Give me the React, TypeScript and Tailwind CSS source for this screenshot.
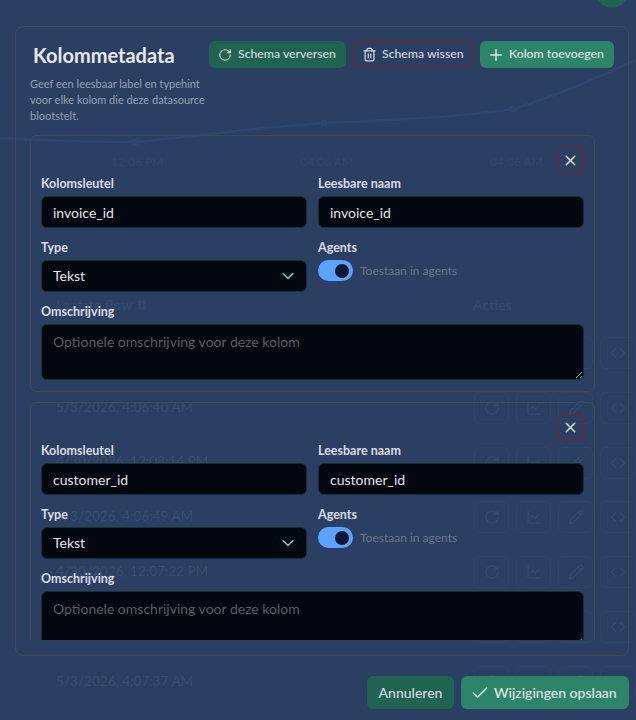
import React from 'react';
import { RotateCw, Trash2, Plus, X, ChevronDown, Check, ChartLine, Pencil, Code } from 'lucide-react';

const rows = [
  '',
  '5/3/2026, 4:06:40 AM',
  '4/30/2026, 12:08:14 PM',
  '5/3/2026, 4:06:49 AM',
  '4/30/2026, 12:07:22 PM',
  '',
  '5/3/2026, 4:07:37 AM',
];

const IconBox: React.FC<{ children: React.ReactNode }> = ({ children }) => (
  <div className="w-[35px] h-[32px] shrink-0 rounded-md border border-[#2d4668] flex items-center justify-center text-[#344b6e]">
    {children}
  </div>
);

const Backdrop: React.FC = () => (
  <div className="absolute inset-0 overflow-hidden">
    <div className="absolute right-[8px] top-[-24px] w-[32px] h-[32px] rounded-full bg-[#1f6350]"></div>
    <svg className="absolute left-0 top-0" width="636" height="160" viewBox="0 0 636 160" fill="none">
      <path d="M0 138 C50 141 90 142 135 142 C200 136 260 127 324 123 C390 120 460 117 513 109 C560 95 600 76 636 60" stroke="#2d4870" strokeWidth="2.5" />
      <circle cx="135" cy="142" r="3.5" fill="#2d4870" />
      <circle cx="324" cy="123" r="3.5" fill="#2d4870" />
      <circle cx="513" cy="109" r="3.5" fill="#2d4870" />
    </svg>
    <div className="pt-[154px] pl-[111px] flex gap-[137px] text-[12px] leading-[16px] text-[#32466a]">
      <span>12:06 PM</span>
      <span>04:06 AM</span>
      <span>04:06 AM</span>
    </div>
    <div className="mt-[125px] pl-[56px] flex justify-between w-[512px] text-[14px] leading-[20px] font-bold text-[#31496c]">
      <span>Laatste flow ⇅</span>
      <span>Acties</span>
    </div>
    <div className="mt-[22px] pl-[56px] flex flex-col gap-[22.8px]">
      {rows.map((date, i) => (
        <div key={i} className="flex items-center h-[32px] text-[13.6px] text-[#3a4d6d]">
          <span className="w-[418px] shrink-0 whitespace-nowrap mt-[-2px]">{date}</span>
          <div className="flex gap-[7px]">
            <IconBox><RotateCw size={16} /></IconBox>
            <IconBox><ChartLine size={16} /></IconBox>
            <IconBox><Pencil size={16} /></IconBox>
            <IconBox><Code size={16} /></IconBox>
          </div>
        </div>
      ))}
    </div>
  </div>
);

const Field: React.FC<{ label: string; children: React.ReactNode }> = ({ label, children }) => (
  <div className="flex flex-col">
    <label className="text-[12.5px] leading-[16px] font-bold text-[#d8dde6] mt-[1px] mb-[4px]">{label}</label>
    {children}
  </div>
);

const fieldClass = 'w-full h-[32px] rounded-md border border-[#14303a] bg-[#03070f] px-[11px] text-[14px] text-[#e3e6eb] flex items-center';

const ColumnCard: React.FC<{ name: string }> = ({ name }) => (
  <div className="shrink-0 border border-[#434a57] rounded-md px-[10px] pt-[11px] pb-[11px]">
    <div className="flex justify-end h-[26px] mb-[2px]">
      <button className="w-[27px] h-[26px] rounded-md border border-[#7d1f2c] flex items-center justify-center text-[#e5e7eb]">
        <X size={17} strokeWidth={2} />
      </button>
    </div>
    <div className="grid grid-cols-2 gap-x-[11px] gap-y-[11px]">
      <Field label="Kolomsleutel">
        <div className={fieldClass}>{name}</div>
      </Field>
      <Field label="Leesbare naam">
        <div className={fieldClass}>{name}</div>
      </Field>
      <Field label="Type">
        <div className={`${fieldClass} justify-between`}>
          <span className="mt-[-2px]">Tekst</span>
          <ChevronDown size={20} className="text-[#5eead4] mr-[-3px]" strokeWidth={1.5} />
        </div>
      </Field>
      <Field label="Agents">
        <div className="flex items-center gap-[7px] h-[21px]">
          <div className="w-[35px] h-[21px] rounded-full bg-[#5ba3ff] flex items-center justify-end pr-[4px]">
            <div className="w-[14px] h-[14px] rounded-full bg-[#0b1a33]"></div>
          </div>
          <span className="text-[12px] text-[#6d7687]">Toestaan in agents</span>
        </div>
      </Field>
      <div className="col-span-2">
        <Field label="Omschrijving">
          <textarea
            readOnly
            placeholder="Optionele omschrijving voor deze kolom"
            className="w-full h-[56px] rounded-md border border-[#14303a] bg-[#03070f] px-[11px] py-[6px] text-[14px] text-[#e3e6eb] placeholder:text-[#565c66] block outline-none"
          />
        </Field>
      </div>
    </div>
  </div>
);

const App: React.FC = () => {
  return (
    <div className="relative w-[636px] h-[720px] overflow-hidden bg-[#2b3f63] font-['Lato',sans-serif]">
      <Backdrop />
      <div className="absolute inset-0 flex flex-col">
        <div className="mt-[26px] ml-[15px] w-[614px] h-[630px] rounded-lg border border-[#434a57] flex flex-col overflow-hidden">
          <div className="flex justify-between h-[108px] px-[14px] pt-[14px] shrink-0">
            <div className="shrink-0">
              <h2 className="text-[20px] leading-[28px] font-bold text-[#e6e8ee] ml-[3px]">Kolommetadata</h2>
              <p className="text-[11px] leading-[16px] text-[#9aa0ad] mt-[7px] w-[175px]">
                Geef een leesbaar label en typehint voor elke kolom die deze datasource blootstelt.
              </p>
            </div>
            <div className="flex gap-[7px] h-[27px] text-[12.25px] font-medium whitespace-nowrap">
              <button className="w-[137px] pl-[9px] rounded-md bg-[#1f6350] text-[#d5dde0] flex items-center gap-[6px]">
                <RotateCw size={14} />Schema verversen
              </button>
              <button className="w-[120px] pl-[8px] rounded-md border border-[#7d1f2c] text-[#d5dae2] flex items-center gap-[5px]">
                <Trash2 size={15} />Schema wissen
              </button>
              <button className="w-[134px] pl-[7px] rounded-md bg-[#2c8568] text-[#e0e6e6] flex items-center gap-[4px]">
                <Plus size={18} />Kolom toevoegen
              </button>
            </div>
          </div>
          <div className="h-[505px] shrink-0 overflow-hidden ml-[14px] mr-[33px] flex flex-col gap-[10px]">
            <ColumnCard name="invoice_id" />
            <ColumnCard name="customer_id" />
          </div>
        </div>
        <div className="flex justify-end gap-[7px] pr-[7px] mt-[20px]">
          <button className="h-[33px] w-[87px] rounded-md bg-[#1f6350] text-[14px] font-medium text-[#d5dde0]">Annuleren</button>
          <button className="h-[33px] w-[168px] pl-[9px] rounded-md bg-[#2c8568] text-[14px] font-medium text-[#e0e6e6] flex items-center gap-[4px]">
            <Check size={20} strokeWidth={1.75} />Wijzigingen opslaan
          </button>
        </div>
      </div>
    </div>
  );
};

export default App;
